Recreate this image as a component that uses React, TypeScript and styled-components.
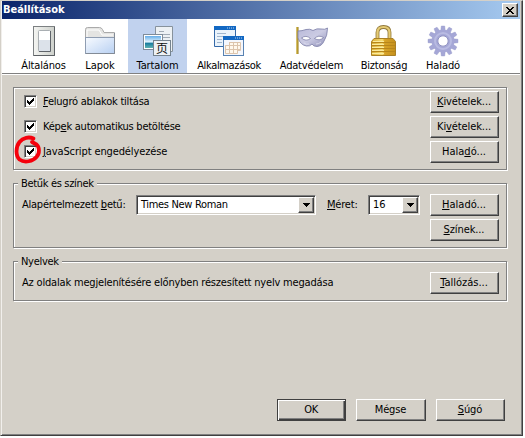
import React from "react";
import styled, { createGlobalStyle, css } from "styled-components";

const face = "#d4d0c8";
const shadow = "#808080";
const dark = "#404040";

const GlobalStyle = createGlobalStyle`
  * { box-sizing: border-box; }
  html, body { margin: 0; background: #fff; overflow: hidden; }
  body {
    font-family: "DejaVu Sans Condensed", "DejaVu Sans", "Liberation Sans", sans-serif;
    font-size: 11px;
    line-height: 14px;
    color: #000;
  }
  button { font: inherit; color: inherit; border-radius: 0; margin: 0; }
`;

const Window = styled.div`
  width: 523px;
  height: 436px;
  background: ${face};
  border: 1px solid ${face};
  border-right-color: ${dark};
  border-bottom-color: ${dark};
  box-shadow: inset 1px 0 #f1efec, inset -1px -1px ${shadow};
  display: flex;
  flex-direction: column;
  padding: 0 2px 1px 1px;
`;

const TitleBar = styled.header`
  height: 18px;
  flex: none;
  display: flex;
  align-items: center;
  justify-content: space-between;
  padding: 0 2px 0 1px;
  background: linear-gradient(90deg, #0a246a, #a6caf0);
  color: #fff;
  font-weight: bold;
`;

const Title = styled.span`
  letter-spacing: -0.02px;
`;

const raised = css`
  border: 1px solid;
  border-color: #fff ${dark} ${dark} #fff;
  box-shadow: inset -1px -1px ${shadow};
  background: ${face};
`;

const CloseButton = styled.button`
  ${raised}
  width: 16px;
  height: 14px;
  padding: 0;
  display: flex;
  align-items: center;
  justify-content: center;
`;

const Toolbar = styled.nav`
  height: 56px;
  flex: none;
  display: flex;
  background: #fff;
  padding-left: 13px;
  border-bottom: 1px solid #fff;
  box-shadow: inset 0 -1px ${shadow};
`;

const Tab = styled.div<{ $width: number; $active?: boolean; $ls: number }>`
  width: ${(p) => p.$width}px;
  height: 54px;
  flex: none;
  display: flex;
  flex-direction: column;
  align-items: center;
  padding-top: 6px;
  background: ${(p) => (p.$active ? "#c1d2ee" : "transparent")};
  letter-spacing: ${(p) => p.$ls}px;
  white-space: nowrap;
  svg { display: block; margin-bottom: 2px; }
`;

const Content = styled.main`
  flex: 1;
  display: flex;
  flex-direction: column;
  padding: 12px 13px 13px 11px;
`;

const Group = styled.fieldset<{ $height: number; $gap?: number; $top?: number }>`
  position: relative;
  margin: 0 0 ${(p) => p.$gap ?? 0}px;
  min-width: 0;
  height: ${(p) => p.$height}px;
  border: 1px solid ${shadow};
  box-shadow: inset 1px 1px #fff, 1px 1px #fff;
  padding: ${(p) => p.$top ?? 10}px 7px 0 8px;
  display: flex;
  justify-content: space-between;
`;

const Legend = styled.span`
  position: absolute;
  top: -7px;
  left: 4px;
  padding: 0 3px;
  background: ${face};
`;

const Label = styled.span<{ $ls?: number }>`
  letter-spacing: ${(p) => p.$ls ?? 0}px;
  white-space: nowrap;
  u { text-underline-offset: 1px; text-decoration-thickness: 1px; }
`;

const FieldLabel = styled(Label)<{ $width: number }>`
  width: ${(p) => p.$width}px;
`;

const Column = styled.div`
  display: flex;
  flex-direction: column;
  gap: 3px;
`;

const Option = styled.label`
  height: 22px;
  display: flex;
  align-items: center;
  padding-left: 2px;
  gap: 6px;
`;

const sunken = css`
  border: 1px solid;
  border-color: ${shadow} #fff #fff ${shadow};
  box-shadow: inset 1px 1px ${dark}, inset -1px -1px ${face};
  background: #fff;
`;

const CheckBox = styled.span`
  ${sunken}
  position: relative;
  top: -1px;
  width: 13px;
  height: 13px;
  flex: none;
  > svg { display: block; margin: 2px; }
`;

const Mark = styled.svg`
  && {
    position: absolute;
    left: -13px;
    top: -13px;
    margin: 0;
  }
`;

const PushButton = styled.button<{ $default?: boolean; $width?: number }>`
  ${raised}
  width: ${(p) => p.$width ?? 69}px;
  height: 22px;
  padding: 0 1px 0 0;
  line-height: 14px;
  ${(p) =>
    p.$default &&
    css`
      border-color: ${dark};
      box-shadow: inset 1px 1px #fff, inset -1px -1px ${dark}, inset -2px -2px ${shadow};
    `}
`;

const FontRow = styled.div`
  height: 22px;
  display: flex;
  align-items: center;
`;

const Select = styled.div<{ $width: number }>`
  ${sunken}
  width: ${(p) => p.$width}px;
  height: 20px;
  margin-right: 11px;
  flex: none;
  display: flex;
  align-items: center;
  justify-content: space-between;
  padding: 1px 1px 1px 4px;
  &:last-child { margin-right: 0; }
`;

const Arrow = styled.span`
  ${raised}
  width: 16px;
  height: 16px;
  display: flex;
  align-items: center;
  justify-content: center;
`;

const Footer = styled.footer`
  margin-top: auto;
  display: flex;
  justify-content: flex-end;
  gap: 10px;
  padding-right: 2px;
`;

const Icon = ({ children }: { children: React.ReactNode }) => (
  <svg width="32" height="32" viewBox="0 0 32 32">{children}</svg>
);

const GeneralIcon = () => (
  <Icon>
    <defs>
      <linearGradient id="plate" x2="1"><stop stopColor="#f4f5f2" /><stop offset="1" stopColor="#cdd0cb" /></linearGradient>
    </defs>
    <rect x="5.500" y="1.500" width="21" height="29" fill="url(#plate)" stroke="#7c8082" />
    <path d="M26.500 2v28.500H6" fill="none" stroke="#5c6064" />
    <rect x="10.500" y="5.500" width="12" height="21" rx="1" fill="#fff" stroke="#a9aeb2" />
    <path d="M11 15h11v11H11z" fill="#dce2ea" />
    <path d="M22.500 6v20.500H11" stroke="#5f646a" fill="none" />
  </Icon>
);

const TabsIcon = () => (
  <Icon>
    <defs><linearGradient id="folder" x2="1" y2="1"><stop stopColor="#f8fbff" /><stop offset="1" stopColor="#b8d0f2" /></linearGradient></defs>
    <path d="M1.500 14V4.500q0-2 2-2h12q2 0 3 2l1.500 3h10.500V14z" fill="#e4e4e2" stroke="#aaa" />
    <path d="M3 12V5h12l3 5h11" fill="none" stroke="#fff" />
    <rect x="1.500" y="12.500" width="29" height="16" fill="url(#folder)" stroke="#8f9db2" />
    <path d="M30.500 8v20.500H2" fill="none" stroke="#838b96" />
  </Icon>
);

const ContentIcon = () => (
  <Icon>
    <defs>
      <linearGradient id="sky" x2="0" y2="1"><stop stopColor="#65ade8" /><stop offset=".5" stopColor="#e5f6ff" /><stop offset=".6" stopColor="#187c9f" /><stop offset="1" stopColor="#5eb3b2" /></linearGradient>
    </defs>
    <path d="M13.500 1.500h17v25h-17z" fill="#edf1f4" stroke="#87929c" />
    <path d="M17 6.500h5M17 9.500h11M17 12.500h11M17 15.500h11M24 18.500h4" stroke="#a2abb5" fill="none" />
    <rect x="1.500" y="9.500" width="19" height="15" fill="#fff" stroke="#7f8c9a" />
    <rect x="3" y="11" width="16" height="12" fill="url(#sky)" />
    <rect x="11.500" y="15.500" width="17" height="15" fill="#edf1f5" stroke="#75838f" />
    <text x="20" y="27.500" textAnchor="middle" fontFamily="Noto Sans CJK SC, sans-serif" fontSize="12" fill="#111">页</text>
  </Icon>
);

const AppsIcon = () => (
  <Icon>
    <path d="M1.500 2.500h21v19h-21z" fill="#eaf3fb" stroke="#3569a8" />
    <path d="M1 1h22v4H1z" fill="#1268c3" />
    <path d="M14 3h7" stroke="#fff" strokeOpacity=".7" strokeDasharray="1 1" />
    <path d="M4 8.500h9M4 11.500h6M4 14.500h5M4 17.500h5" stroke="#a1b6ce" />
    <rect x="10.500" y="12.500" width="20" height="18" fill="#f4f7fd" stroke="#5882b2" />
    <path d="M10 11h21v4H10z" fill="#1268c3" /><path d="M22 13h7" stroke="#fff" strokeOpacity=".7" strokeDasharray="1 1" />
    <path d="M16.500 17.500h11v8h-3v3h-12v-8h4zM12.500 20.500h15M12.500 24.500h15M16.500 17v11M20.500 17v11M24.500 17v11" fill="#fff8ed" stroke="#dcc4ac" />
  </Icon>
);

const MaskIcon = () => (
  <Icon>
    <defs><linearGradient id="mask" x2="1" y2="1"><stop stopColor="#b9b9d9" /><stop offset=".5" stopColor="#cbcbe3" /><stop offset="1" stopColor="#8f90b8" /></linearGradient></defs>
    <path d="M1.500 2v27" stroke="#8d7112" strokeWidth="2" /><path d="M1 2v27" stroke="#e2c44b" />
    <path d="M2 6q4 0 8-1.500q4-1 7 1q4-2.500 8-1.500q4 1 6.500-1q0 8-3.500 13q-2 5-7 5.500q-3.500 0-5-2.500q-2 2.500-5.500 2q-6-1-8.500-8z" fill="url(#mask)" stroke="#8587ae" strokeWidth=".9" />
    <path d="M5.500 13q4.500-3.500 9 .5q-4.500 3.500-9-.5zM18.500 13.500q4-4 9-1q-4 4-9 1z" fill="#fff" stroke="#7476a0" strokeWidth=".7" />
    <path d="M8 18q2 2 5 1M20 19q3 0 5-2" stroke="#e0e0f0" strokeWidth=".8" fill="none" />
  </Icon>
);

const LockIcon = () => (
  <Icon>
    <defs><linearGradient id="brass" x2="1"><stop stopColor="#d9ae35" /><stop offset=".45" stopColor="#f6dc73" /><stop offset=".55" stopColor="#d7a328" /><stop offset="1" stopColor="#c5901c" /></linearGradient></defs>
    <path d="M9.500 14V7.500q0-5.500 6-5.500t6 5.500V14" fill="none" stroke="#91783a" strokeWidth="3.800" />
    <path d="M9.500 14V7.500q0-5.500 6-5.500t6 5.500V14" fill="none" stroke="#e5cb74" strokeWidth="2.200" />
    <path d="M6 13.500h19l2.500 3v14h-24v-14z" fill="url(#brass)" stroke="#a98026" />
    <path d="M4 17.500h23M4 20.500h23M4 23.500h23M4 26.500h23" stroke="#b8861a" />
    <path d="M5 16.500h11M4 19.500h12M4 22.500h12M4 25.500h12M4 28.500h12" stroke="#faea9c" />
  </Icon>
);

const GearIcon = () => (
  <Icon>
    <g transform="translate(16 16)" fill="#a5a7d6">
      {Array.from({ length: 12 }, (_, i) => (
        <path key={i} d="M-2.300-10L-1.700-15H1.700L2.300-10Z" stroke="#9698c8" strokeWidth=".4" transform={`rotate(${i * 30})`} />
      ))}
      <circle r="8.300" fill="none" stroke="#a5a7d6" strokeWidth="6" />
      <circle r="8" fill="none" stroke="#b9bbe2" strokeWidth="2" />
      <circle r="5.200" fill="#fff" stroke="#8d8fc0" />
    </g>
  </Icon>
);

const tabs = [
  { name: "Általános", width: 57, ls: -0.15, icon: <GeneralIcon /> },
  { name: "Lapok", width: 56, ls: -0.05, icon: <TabsIcon /> },
  { name: "Tartalom", width: 59, ls: -0.1, icon: <ContentIcon />, active: true },
  { name: "Alkalmazások", width: 84, ls: -0.35, icon: <AppsIcon /> },
  { name: "Adatvédelem", width: 81, ls: -0.2, icon: <MaskIcon /> },
  { name: "Biztonság", width: 64, ls: -0.2, icon: <LockIcon /> },
  { name: "Haladó", width: 54, ls: -0.1, icon: <GearIcon /> },
];

const Check = ({ circled }: { circled?: boolean }) => (
  <CheckBox>
    <svg width="7" height="7" shapeRendering="crispEdges">
      <path d="M0 2h1v1h1v1h1V3h1V2h1V1h1V0h1v3H6v1H5v1H4v1H3v1H2V6H1V5H0z" />
    </svg>
    {circled && (
      <Mark width="34" height="34" viewBox="0 0 34 34">
        <path d="M21.500 5.500C17 3.500 11 4.500 7.500 9C3.500 14 3.500 23 7.500 26.500C13 30.500 21 28 24.500 24C28 20 27.500 14 24.500 11.500L20 9" fill="none" stroke="#f5000c" strokeWidth="3.800" strokeLinecap="round" strokeLinejoin="round" />
      </Mark>
    )}
  </CheckBox>
);

const DropDown = ({ value, ls, width }: { value: string; ls: number; width: number }) => (
  <Select $width={width}>
    <Label $ls={ls}>{value}</Label>
    <Arrow><svg width="7" height="4" shapeRendering="crispEdges"><path d="M0 0h7v1H6v1H5v1H4v1H3V3H2V2H1V1H0z" /></svg></Arrow>
  </Select>
);

export default function App() {
  return (
    <>
      <GlobalStyle />
      <Window>
        <TitleBar>
          <Title>Beállítások</Title>
          <CloseButton aria-label="Bezárás">
            <svg width="8" height="7" shapeRendering="crispEdges"><path d="M0 0h2v1h1v1h2V1h1V0h2v1H7v1H6v1H5v1h1v1h1v1h1v1H6V6H5V5H3v1H2v1H0V6h1V5h1V4h1V3H2V2H1V1H0z" /></svg>
          </CloseButton>
        </TitleBar>
        <Toolbar>
          {tabs.map((t) => (
            <Tab key={t.name} $width={t.width} $active={t.active} $ls={t.ls}>
              {t.icon}
              <span>{t.name}</span>
            </Tab>
          ))}
        </Toolbar>
        <Content>
          <Group $height={83} $gap={13} $top={3}>
            <Column>
              <Option><Check /><Label $ls={-0.22}><u>F</u>elugró ablakok tiltása</Label></Option>
              <Option><Check /><Label $ls={-0.25}>Kép<u>e</u>k automatikus betöltése</Label></Option>
              <Option><Check circled /><Label $ls={-0.12}><u>J</u>avaScript engedélyezése</Label></Option>
            </Column>
            <Column>
              <PushButton><Label $ls={-0.1}><u>K</u>ivételek...</Label></PushButton>
              <PushButton><Label $ls={-0.1}>Ki<u>v</u>ételek...</Label></PushButton>
              <PushButton><Label>Hala<u>d</u>ó...</Label></PushButton>
            </Column>
          </Group>
          <Group $height={65} $gap={13}>
            <Legend><Label $ls={-0.33}>Betűk és színek</Label></Legend>
            <FontRow>
              <FieldLabel $width={114} $ls={-0.24}>Alapértelmezett <u>b</u>etű:</FieldLabel>
              <DropDown value="Times New Roman" ls={-0.33} width={180} />
              <FieldLabel $width={41} $ls={-0.2}><u>M</u>éret:</FieldLabel>
              <DropDown value="16" ls={0} width={52} />
            </FontRow>
            <Column>
              <PushButton><Label><u>H</u>aladó...</Label></PushButton>
              <PushButton><Label $ls={-0.1}><u>S</u>zínek...</Label></PushButton>
            </Column>
          </Group>
          <Group $height={40}>
            <Legend><Label $ls={-0.3}>Nyelvek</Label></Legend>
            <FontRow><Label $ls={-0.18}>Az oldalak megjelenítésére előnyben részesített nyelv megadása</Label></FontRow>
            <PushButton><Label><u>T</u>allózás...</Label></PushButton>
          </Group>
          <Footer>
            <PushButton $default><Label $ls={-0.3}>OK</Label></PushButton>
            <PushButton $width={70}><Label $ls={-0.15}>Mégse</Label></PushButton>
            <PushButton><Label $ls={-0.1}><u>S</u>úgó</Label></PushButton>
          </Footer>
        </Content>
      </Window>
    </>
  );
}
